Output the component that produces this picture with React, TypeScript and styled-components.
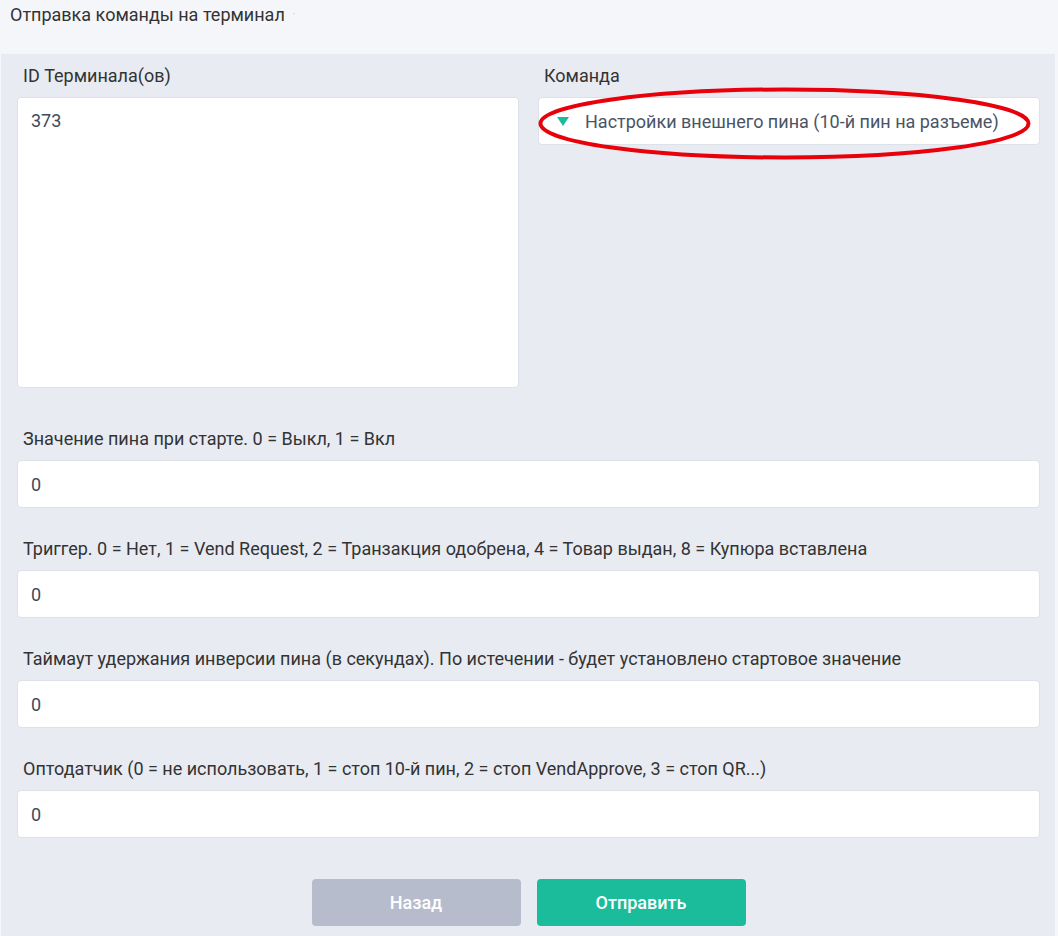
import React from "react";
import styled, { createGlobalStyle } from "styled-components";

const Global = createGlobalStyle`
  html, body { margin: 0; padding: 0; background: #f5f6fa; }
  body { font-family: Roboto, "Noto Sans", "Liberation Sans", sans-serif; }
  * { box-sizing: border-box; }
`;

const Page = styled.div`
  width: 1058px;
  height: 936px;
  display: flex;
  flex-direction: column;
  background: #f5f6fa;
  overflow: hidden;
`;

const Header = styled.div`
  height: 54px;
  padding: 4px 10px 0 10px;
  font-size: 18px;
  line-height: 22px;
  color: #333;
  display: flex;
  align-items: flex-start;
`;

const HeaderDot = styled.span`
  color: #bbb;
  font-size: 10px;
  margin-left: 8px;
`;

const Panel = styled.div`
  flex: 1;
  margin: 0 3px 0 1px;
  background: #e8ebf2;
  padding: 12px 15px 0 16px;
  display: flex;
  flex-direction: column;
`;

const TopRow = styled.div`
  display: grid;
  grid-template-columns: 502px 502px;
  column-gap: 19px;
`;

const Field = styled.div<{ $gapAfter?: number }>`
  display: flex;
  flex-direction: column;
  margin-bottom: ${(p) => p.$gapAfter ?? 0}px;
`;

const Label = styled.div`
  font-size: 18px;
  line-height: 20px;
  color: #333;
  padding-left: 6px;
  margin-bottom: 11px;
  white-space: nowrap;
`;

const TextArea = styled.div`
  height: 291px;
  background: #fff;
  border: 1px solid #dde1e8;
  border-radius: 4px;
  padding: 12px 13px;
  font-size: 18px;
  line-height: 22px;
  color: #3d4a5c;
`;

const Select = styled.div`
  height: 48px;
  background: #fff;
  border: 1px solid #dde1e8;
  border-radius: 4px;
  display: flex;
  align-items: center;
  padding-left: 18px;
  font-size: 18px;
  color: #4a5466;
  position: relative;
  white-space: nowrap;
`;

const Triangle = styled.span`
  flex-shrink: 0;
  width: 0;
  height: 0;
  border-left: 6px solid transparent;
  border-right: 6px solid transparent;
  border-top: 9px solid #1abc9c;
  margin-right: 16px;
  margin-top: 1px;
`;

const Ellipse = styled.svg`
  position: absolute;
  left: -10px;
  top: -14px;
  overflow: visible;
  pointer-events: none;
`;

const Input = styled.div`
  height: 48px;
  background: #fff;
  border: 1px solid #dde1e8;
  border-radius: 4px;
  display: flex;
  align-items: center;
  padding-left: 13px;
  font-size: 18px;
  color: #3d4a5c;
`;

const Buttons = styled.div`
  display: flex;
  justify-content: center;
  gap: 16px;
  margin-top: 41px;
`;

const Button = styled.button<{ $primary?: boolean }>`
  width: 209px;
  height: 47px;
  border: none;
  border-radius: 4px;
  background: ${(p) => (p.$primary ? "#1abc9c" : "#b6bccb")};
  color: #fff;
  font-family: Roboto, "Noto Sans", sans-serif;
  font-size: 18px;
  font-weight: 500;
  cursor: pointer;
`;

const fields = [
  "Значение пина при старте. 0 = Выкл, 1 = Вкл",
  "Триггер. 0 = Нет, 1 = Vend Request, 2 = Транзакция одобрена, 4 = Товар выдан, 8 = Купюра вставлена",
  "Таймаут удержания инверсии пина (в секундах). По истечении - будет установлено стартовое значение",
  "Оптодатчик (0 = не использовать, 1 = стоп 10-й пин, 2 = стоп VendApprove, 3 = стоп QR...)",
];

export default function App() {
  return (
    <Page>
      <Global />
      <Header>
        Отправка команды на терминал<HeaderDot>·</HeaderDot>
      </Header>
      <Panel>
        <TopRow>
          <Field $gapAfter={41}>
            <Label>ID Терминала(ов)</Label>
            <TextArea>373</TextArea>
          </Field>
          <Field>
            <Label>Команда</Label>
            <Select>
              <Triangle />
              Настройки внешнего пина (10-й пин на разъеме)
              <Ellipse width="520" height="80">
                <ellipse cx="255.5" cy="39.5" rx="244" ry="34" fill="none" stroke="#e8000b" strokeWidth="4" />
              </Ellipse>
            </Select>
          </Field>
        </TopRow>
        {fields.map((f, i) => (
          <Field key={i} $gapAfter={i < fields.length - 1 ? 31 : 0}>
            <Label>{f}</Label>
            <Input>0</Input>
          </Field>
        ))}
        <Buttons>
          <Button>Назад</Button>
          <Button $primary>Отправить</Button>
        </Buttons>
      </Panel>
    </Page>
  );
}
